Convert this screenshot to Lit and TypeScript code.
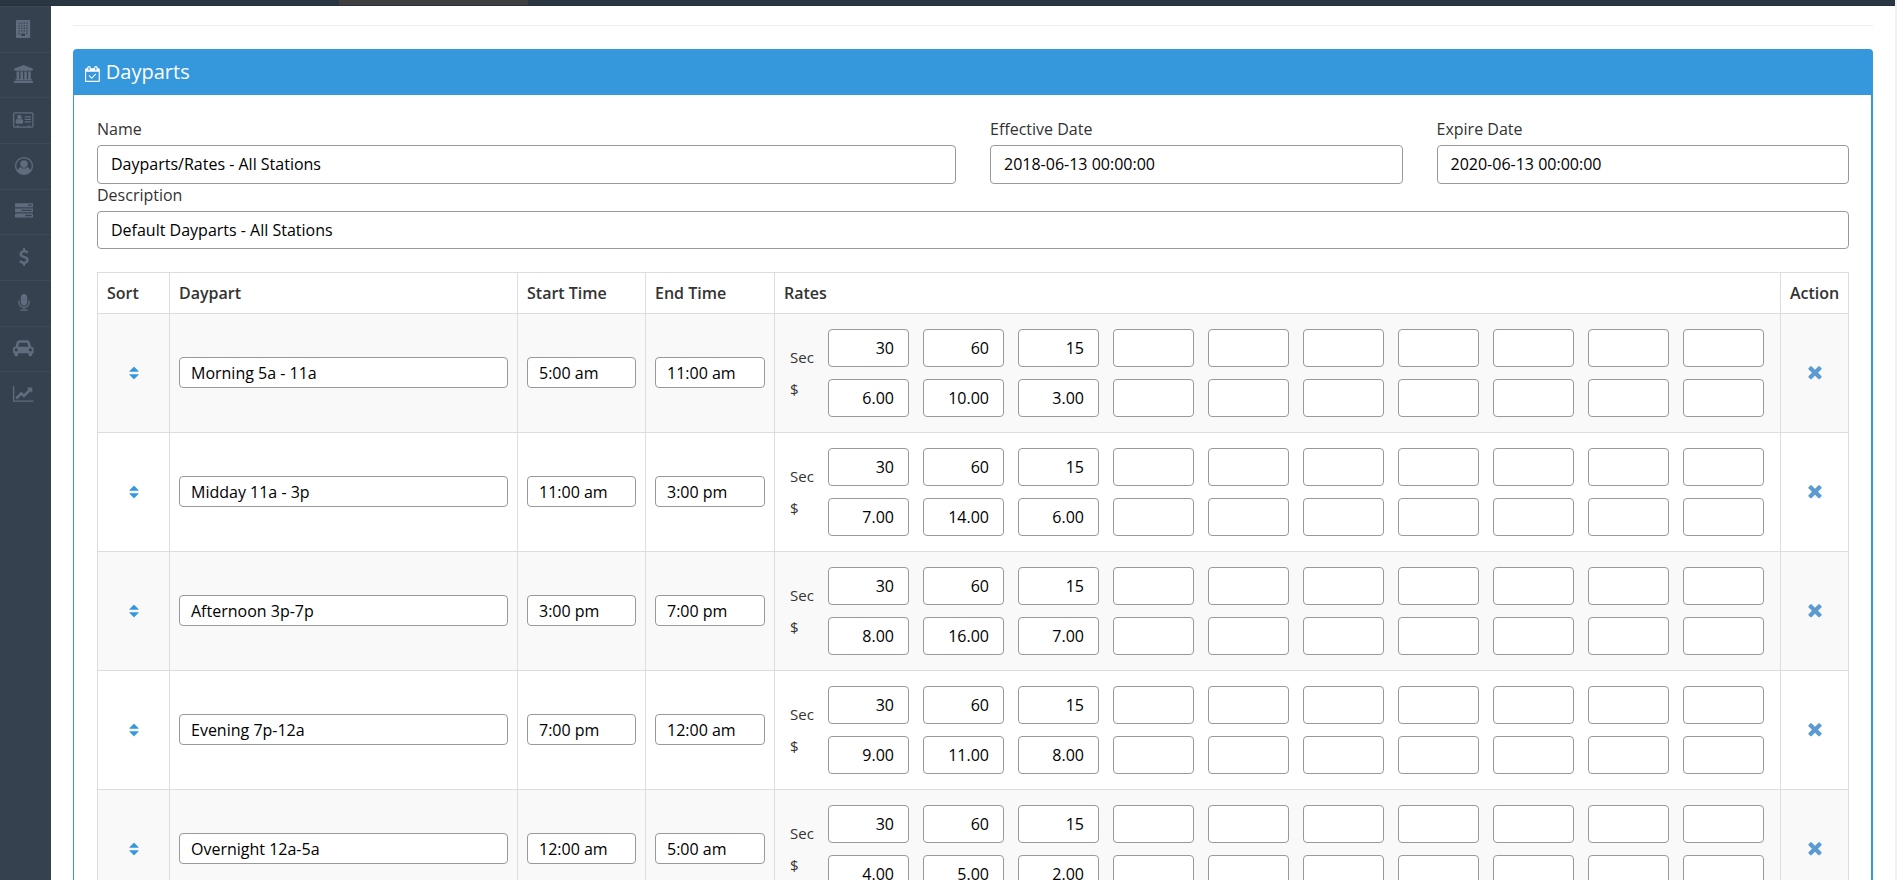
import { LitElement, html, css, svg } from "lit";
import { customElement } from "lit/decorators.js";

interface Icon {
  w: number;
  d: string;
}

const ICONS: Record<string, Icon> = {
  building: {
    w: 1408,
    d: "M64 0h1280q26 0 45 19t19 45v1664q0 26-19 45t-45 19h-1280q-26 0-45-19t-19-45v-1664q0-26 19-45t45-19zM256 256v128h128v-128zM512 256v128h128v-128zM768 256v128h128v-128zM1024 256v128h128v-128zM256 512v128h128v-128zM512 512v128h128v-128zM768 512v128h128v-128zM1024 512v128h128v-128zM256 768v128h128v-128zM512 768v128h128v-128zM768 768v128h128v-128zM1024 768v128h128v-128zM256 1024v128h128v-128zM512 1024v128h128v-128zM768 1024v128h128v-128zM1024 1024v128h128v-128zM256 1280v128h128v-128zM1024 1280v128h128v-128zM512 1344v256h384v-256z",
  },
  bank: {
    w: 1920,
    d: "M960 0l960 384v128h-128q0 26-20.5 45t-48.5 19h-1526q-28 0-48.5-19t-20.5-45h-128v-128zm-704 640h256v768h128v-768h256v768h128v-768h256v768h128v-768h256v768h59q28 0 48.5 19t20.5 45v64h-1664v-64q0-26 20.5-45t48.5-19h59v-768zm1595 960q28 0 48.5 19t20.5 45v128h-1920v-128q0-26 20.5-45t48.5-19h1782z",
  },
  card: {
    w: 2048,
    d: "M160 128h1728q66 0 113 47t47 113v1216q0 66-47 113t-113 47h-1728q-66 0-113-47t-47-113v-1216q0-66 47-113t113-47zM128 288v1216q0 32 32 32h224v-96h192v96h896v-96h192v96h224q32 0 32-32v-1216q0-32-32-32h-1728q-32 0-32 32zM1024 1107q0 77-46 123t-110 46h-456q-64 0-110-46t-46-123q0-291 170-339 90 84 214 84t214-84q170 48 170 339zM864 608q0 92-66 158t-158 66-158-66-66-158 66-158 158-66 158 66 66 158zM1184 1024h576q32 0 32 32v64q0 32-32 32h-576q-32 0-32-32v-64q0-32 32-32zM1184 768h576q32 0 32 32v64q0 32-32 32h-576q-32 0-32-32v-64q0-32 32-32zM1184 512h576q32 0 32 32v64q0 32-32 32h-576q-32 0-32-32v-64q0-32 32-32z",
  },
  user: {
    w: 1792,
    d: "M896 0q182 0 348 71t286 191 191 286 71 348q0 181-70.5 347t-190.5 286-286 191.5-349 71.5-349-71-285.5-191.5-190.5-286-71-347.5 71-348 191-286 286-191 348-71zm619 1351q149-205 149-455 0-156-61-298t-164-245-245-164-298-61-298 61-245 164-164 245-61 298q0 250 149 455 66-327 306-327 131 128 313 128t313-128q240 0 306 327zm-235-647q0-159-112.5-271.5t-271.5-112.5-271.5 112.5-112.5 271.5 112.5 271.5 271.5 112.5 271.5-112.5 112.5-271.5z",
  },
  tasks: {
    w: 1792,
    d: "M1024 1408h640v-128h-640v128zm-384-512h1024v-128h-1024v128zm640-512h384v-128h-384v128zm512 832v256q0 26-19 45t-45 19h-1664q-26 0-45-19t-19-45v-256q0-26 19-45t45-19h1664q26 0 45 19t19 45zm0-512v256q0 26-19 45t-45 19h-1664q-26 0-45-19t-19-45v-256q0-26 19-45t45-19h1664q26 0 45 19t19 45zm0-512v256q0 26-19 45t-45 19h-1664q-26 0-45-19t-19-45v-256q0-26 19-45t45-19h1664q26 0 45 19t19 45z",
  },
  usd: {
    w: 1792,
    d: "M1362 1185q0 153-99.5 263.5t-258.5 136.5v175q0 14-9 23t-23 9h-135q-13 0-22.5-9.5t-9.5-22.5v-175q-66-9-127.5-31t-101.5-44.5-74-48-46.5-37.5-17.5-18q-17-21-2-41l103-135q7-10 23-12 15-2 24 9l2 2q113 99 243 125 37 8 74 8 81 0 142.5-43t61.5-122q0-28-15-53t-33.5-42-58.5-37.5-66-32-80-32.5q-39-16-61.5-25t-61.5-26.5-62.5-31-56.5-35.5-53.5-42.5-43.5-49-35.5-58-21-66.5-8.5-78q0-138 98-242t255-134v-180q0-13 9.5-22.5t22.5-9.5h135q14 0 23 9t9 23v176q57 6 110.5 23t87 33.5 63.5 37.5 39 29 15 14q17 18 5 38l-81 146q-8 15-23 16-14 3-27-7-3-3-14.5-12t-39-26.5-58.5-32-74.5-26-85.5-11.5q-95 0-155 43t-60 111q0 26 8.5 48t29.5 41.5 39.5 33 56 31 60.5 27 70 27.5q53 20 81 31.5t76 35 75.5 42.5 62 50 53 63.5 31.5 76.5 13 94z",
  },
  microphone: {
    w: 1792,
    d: "M1472 704v128q0 221-147.5 384.5t-364.5 187.5v132h256q26 0 45 19t19 45-19 45-45 19h-640q-26 0-45-19t-19-45 19-45 45-19h256v-132q-217-24-364.5-187.5t-147.5-384.5v-128q0-26 19-45t45-19 45 19 19 45v128q0 185 131.5 316.5t316.5 131.5 316.5-131.5 131.5-316.5v-128q0-26 19-45t45-19 45 19 19 45zm-256-384v512q0 132-94 226t-226 94-226-94-94-226v-512q0-132 94-226t226-94 226 94 94 226z",
  },
  car: {
    w: 2048,
    d: "M480 1088q0-66-47-113t-113-47-113 47-47 113 47 113 113 47 113-47 47-113zm36-320h1016l-89-357q-2-8-14-17.5t-21-9.5h-768q-9 0-21 9.5t-14 17.5zm1372 320q0-66-47-113t-113-47-113 47-47 113 47 113 113 47 113-47 47-113zm160-96v384q0 14-9 23t-23 9h-96v128q0 80-56 136t-136 56-136-56-56-136v-128h-1024v128q0 80-56 136t-136 56-136-56-56-136v-128h-96q-14 0-23-9t-9-23v-384q0-93 65.5-158.5t158.5-65.5h28l105-419q23-94 104-157.5t179-63.5h768q98 0 179 63.5t104 157.5l105 419h28q93 0 158.5 65.5t65.5 158.5z",
  },
  chart: {
    w: 2048,
    d: "M2048 1536v128h-2048v-1536h128v1408h1920zm-128-1248v435q0 21-19.5 29.5t-35.5-7.5l-121-121-633 633q-10 10-23 10t-23-10l-233-233-416 416-192-192 585-585q10-10 23-10t23 10l233 233 464-464-121-121q-16-16-7.5-35.5t29.5-19.5h435q14 0 23 9t9 23z",
  },
  calendar: {
    w: 1664,
    d: "M128 256h128v-96q0-66 47-113t113-47h64q66 0 113 47t47 113v96h384v-96q0-66 47-113t113-47h64q66 0 113 47t47 113v96h128q52 0 90 38t38 90v1280q0 52-38 90t-90 38h-1408q-52 0-90-38t-38-90v-1280q0-52 38-90t90-38zM128 640v1024h1408v-1024zM384 160v288q0 32 32 32h64q32 0 32-32v-288q0-32-32-32h-64q-32 0-32 32zM1152 160v288q0 32 32 32h64q32 0 32-32v-288q0-32-32-32h-64q-32 0-32 32zM1239 966l-467 466q-10 10-23 10t-23-10l-301-300q-10-10-10-23t10-23l45-45q10-10 23-10t23 10l233 234 399-399q10-10 23-10t23 10l45 45q10 10 10 23t-10 22z",
  },
  sort: {
    w: 1792,
    d: "M1408 1088q0 26-19 45l-448 448q-19 19-45 19t-45-19l-448-448q-19-19-19-45t19-45 45-19h896q26 0 45 19t19 45zm0-384q0 26-19 45t-45 19h-896q-26 0-45-19t-19-45 19-45l448-448q19-19 45-19t45 19l448 448q19 19 19 45z",
  },
  times: {
    w: 1792,
    d: "M1490 1322q0 40-28 68l-136 136q-28 28-68 28t-68-28l-294-294-294 294q-28 28-68 28t-68-28l-136-136q-28-28-28-68t28-68l294-294-294-294q-28-28-28-68t28-68l136-136q28-28 68-28t68 28l294 294 294-294q28-28 68-28t68 28l136 136q28 28 28 68t-28 68l-294 294 294 294q28 28 28 68z",
  },
};

const icon = (name: string) => {
  const { w, d } = ICONS[name];
  return html`<svg class="icon icon-${name}" viewBox="0 0 ${w} 1792" aria-hidden="true">
    ${svg`<path fill="currentColor" fill-rule="evenodd" d=${d}></path>`}
  </svg>`;
};

const NAV: [string, string][] = [
  ["building", "Stations"],
  ["bank", "Agencies"],
  ["card", "Advertisers"],
  ["user", "Contacts"],
  ["tasks", "Orders"],
  ["usd", "Billing"],
  ["microphone", "Copy"],
  ["car", "Traffic"],
  ["chart", "Reports"],
];

interface Daypart {
  name: string;
  start: string;
  end: string;
  rates: [string, string][];
}

const DAYPARTS: Daypart[] = [
  { name: "Morning 5a - 11a", start: "5:00 am", end: "11:00 am", rates: [["30", "6.00"], ["60", "10.00"], ["15", "3.00"]] },
  { name: "Midday 11a - 3p", start: "11:00 am", end: "3:00 pm", rates: [["30", "7.00"], ["60", "14.00"], ["15", "6.00"]] },
  { name: "Afternoon 3p-7p", start: "3:00 pm", end: "7:00 pm", rates: [["30", "8.00"], ["60", "16.00"], ["15", "7.00"]] },
  { name: "Evening 7p-12a", start: "7:00 pm", end: "12:00 am", rates: [["30", "9.00"], ["60", "11.00"], ["15", "8.00"]] },
  { name: "Overnight 12a-5a", start: "12:00 am", end: "5:00 am", rates: [["30", "4.00"], ["60", "5.00"], ["15", "2.00"]] },
];

const SLOTS = Array.from({ length: 10 }, (_, i) => i);

@customElement("app-root")
export class AppRoot extends LitElement {
  static styles = css`
    :host {
      display: flex;
      flex-direction: column;
      height: 100vh;
      overflow: hidden;
      box-sizing: border-box;
      border-right: 2px solid #f1f1f1;
      background: #fff;
      color: #333;
      font: 400 16px/24px "Open Sans", sans-serif;
    }
    * {
      box-sizing: border-box;
    }
    .topbar {
      flex: none;
      height: 6px;
      padding-left: 339px;
      background: #2b3643;
      border-bottom: 1px solid #28303d;
    }
    .tab {
      width: 189px;
      height: 5px;
      background: #3f3f3f;
    }
    .body {
      flex: 1;
      display: flex;
      min-height: 0;
    }
    .sidebar {
      flex: none;
      width: 51px;
      background: #364150;
    }
    .nav {
      display: grid;
      grid-auto-rows: 1fr;
      height: 411px;
      margin: 0;
      padding: 0;
      list-style: none;
    }
    .nav-link {
      display: flex;
      align-items: center;
      justify-content: center;
      height: 100%;
      padding: 0 4px 1px 0;
      border-top: 1px solid #3d4957;
      color: #606c7d;
    }
    .icon {
      display: block;
      flex: none;
      height: 18px;
    }
    .icon-sort,
    .icon-calendar {
      height: 16px;
    }
    .icon-times {
      height: 20px;
    }
    .main {
      flex: 1;
      min-width: 0;
      padding: 19px 22px 0;
      overflow: hidden;
    }
    .rule {
      height: 1px;
      margin: 0 0 23px;
      border: 0;
      background: #eee;
    }
    .panel {
      border: 1px solid #3598dc;
      border-right-width: 2px;
      border-radius: 4px;
    }
    .panel-head {
      display: flex;
      align-items: center;
      gap: 6px;
      height: 45px;
      padding: 0 11px;
      background: #3598dc;
      color: #fff;
    }
    .panel-icon {
      padding-top: 3px;
    }
    .title {
      margin: 0;
      padding-bottom: 2px;
      font-size: 20px;
      line-height: 28px;
      font-weight: 400;
    }
    .panel-body {
      padding: 23px 22px 24px 23px;
    }
    .form {
      display: grid;
      grid-template-columns: repeat(4, 1fr);
      column-gap: 34px;
    }
    .name {
      grid-column: span 2;
    }
    .description {
      grid-column: 1 / -1;
    }
    .label {
      display: block;
      padding-bottom: 5px;
      line-height: 22px;
    }
    .input {
      display: block;
      width: 100%;
      min-width: 0;
      height: 39px;
      margin: 0;
      padding: 0 14px 1px 13px;
      border: 1px solid #999;
      border-radius: 4px;
      background: #fff;
      color: #000;
      font: inherit;
      outline: none;
    }
    .description .input {
      height: 38px;
    }
    .small {
      height: 31px;
      padding: 1px 11px 0;
    }
    .rate {
      flex: 1;
      height: 38px;
      text-align: right;
    }
    .table {
      width: 100%;
      margin-top: 23px;
      table-layout: fixed;
      border-collapse: collapse;
    }
    .col-sort {
      width: 72px;
    }
    .col-daypart {
      width: 348px;
    }
    .col-start {
      width: 128px;
    }
    .col-end {
      width: 129px;
    }
    .col-action {
      width: 68px;
    }
    .th {
      height: 41px;
      padding: 0 9px;
      border: 1px solid #ddd;
      font-weight: 600;
      text-align: left;
    }
    .td {
      height: 119px;
      padding: 0 9px;
      border: 1px solid #ddd;
      vertical-align: middle;
    }
    .td-edit {
      padding-bottom: 2px;
    }
    .row:nth-child(odd) {
      background: #f9f9f9;
    }
    .rates {
      display: flex;
      align-items: center;
      padding: 0 7px 0 6px;
    }
    .units {
      flex: none;
      width: 38px;
      font-size: 15px;
      line-height: 32px;
    }
    .unit {
      display: block;
    }
    .lines {
      flex: 1;
      display: grid;
      gap: 12px;
      min-width: 0;
    }
    .line {
      display: flex;
      gap: 14px;
    }
    .btn {
      display: flex;
      align-items: center;
      justify-content: center;
      width: 100%;
      margin: 0;
      padding: 0;
      border: 0;
      background: none;
      cursor: pointer;
    }
    .btn-sort {
      color: #3598dc;
    }
    .btn-remove {
      color: #5b9bd1;
    }
  `;

  private renderRow(part: Daypart) {
    return html`<tr class="row">
      <td class="td">
        <button class="btn btn-sort" type="button" aria-label="Sort ${part.name}">${icon("sort")}</button>
      </td>
      <td class="td td-edit"><input class="input small" aria-label="Daypart" .value=${part.name} /></td>
      <td class="td td-edit"><input class="input small" aria-label="Start Time" .value=${part.start} /></td>
      <td class="td td-edit"><input class="input small" aria-label="End Time" .value=${part.end} /></td>
      <td class="td">
        <div class="rates">
          <div class="units"><span class="unit">Sec</span><span class="unit">$</span></div>
          <div class="lines">
            ${[0, 1].map(
              (k) => html`<div class="line">
                ${SLOTS.map(
                  (i) => html`<input
                    class="input rate"
                    aria-label="${k ? "Rate" : "Seconds"} ${i + 1}"
                    .value=${part.rates[i]?.[k] ?? ""}
                  />`
                )}
              </div>`
            )}
          </div>
        </div>
      </td>
      <td class="td td-edit">
        <button class="btn btn-remove" type="button" aria-label="Remove ${part.name}">${icon("times")}</button>
      </td>
    </tr>`;
  }

  render() {
    return html`
      <header class="topbar"><div class="tab"></div></header>
      <div class="body">
        <nav class="sidebar">
          <ul class="nav">
            ${NAV.map(
              ([name, label]) => html`<li><a class="nav-link" href="#${name}" aria-label=${label}>${icon(name)}</a></li>`
            )}
          </ul>
        </nav>
        <main class="main">
          <hr class="rule" />
          <section class="panel">
            <div class="panel-head">
              <span class="panel-icon">${icon("calendar")}</span>
              <h1 class="title">Dayparts</h1>
            </div>
            <div class="panel-body">
              <div class="form">
                <div class="name">
                  <label class="label" for="name">Name</label>
                  <input class="input" id="name" .value=${"Dayparts/Rates - All Stations"} />
                </div>
                <div>
                  <label class="label" for="effective">Effective Date</label>
                  <input class="input" id="effective" .value=${"2018-06-13 00:00:00"} />
                </div>
                <div>
                  <label class="label" for="expire">Expire Date</label>
                  <input class="input" id="expire" .value=${"2020-06-13 00:00:00"} />
                </div>
                <div class="description">
                  <label class="label" for="description">Description</label>
                  <input class="input" id="description" .value=${"Default Dayparts - All Stations"} />
                </div>
              </div>
              <table class="table">
                <colgroup>
                  <col class="col-sort" />
                  <col class="col-daypart" />
                  <col class="col-start" />
                  <col class="col-end" />
                  <col />
                  <col class="col-action" />
                </colgroup>
                <thead>
                  <tr>
                    ${["Sort", "Daypart", "Start Time", "End Time", "Rates", "Action"].map(
                      (t) => html`<th class="th" scope="col">${t}</th>`
                    )}
                  </tr>
                </thead>
                <tbody>
                  ${DAYPARTS.map((part) => this.renderRow(part))}
                </tbody>
              </table>
            </div>
          </section>
        </main>
      </div>
    `;
  }
}
